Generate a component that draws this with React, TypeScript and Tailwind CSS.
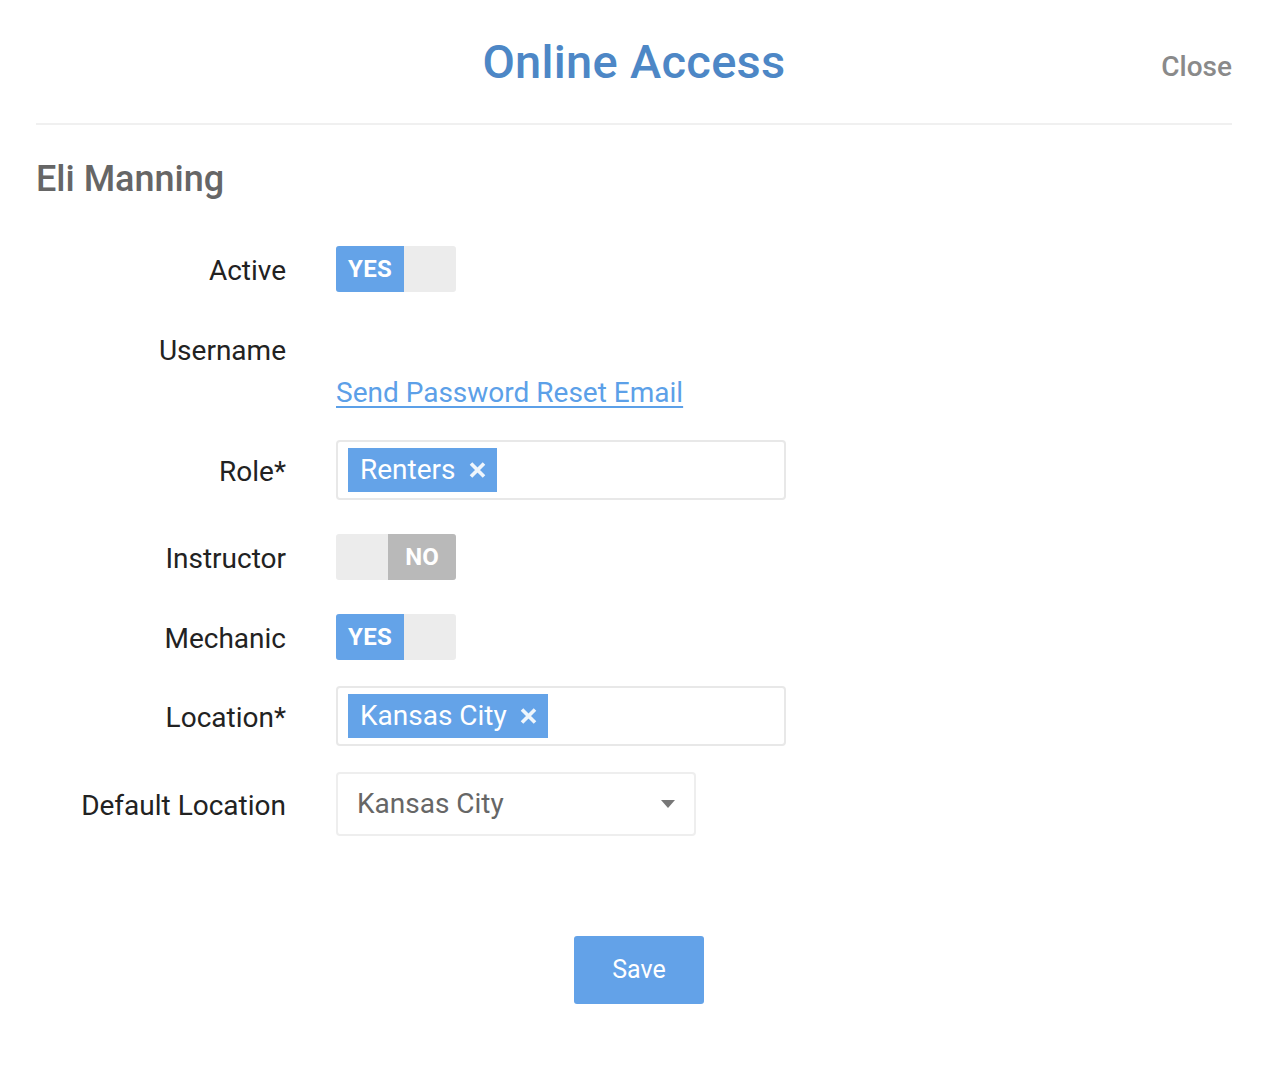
import React from "react";

function Toggle({ on }: { on: boolean }) {
  if (on) {
    return (
      <div className="flex h-[46px] w-[120px] rounded-[3px] overflow-hidden bg-[#ececec]">
        <div className="flex w-[68px] items-center justify-center bg-[#64a3e8] text-[24px] font-bold text-white tracking-[0.3px]">YES</div>
      </div>
    );
  }
  return (
    <div className="flex h-[46px] w-[120px] rounded-[3px] overflow-hidden bg-[#ececec]">
      <div className="w-[52px]" />
      <div className="flex flex-1 items-center justify-center bg-[#b9b9b9] text-[24px] font-bold text-white">NO</div>
    </div>
  );
}

function Tag({ text }: { text: string }) {
  return (
    <div className="flex h-[44px] items-center gap-[13px] bg-[#64a3e8] pl-[12px] pr-[11px] text-white">
      <span className="text-[28px] leading-none">{text}</span>
      <svg width="17" height="16" viewBox="0 0 17 16">
        <path d="M2 1.5 L15 14.5 M15 1.5 L2 14.5" stroke="white" strokeWidth="3.6" strokeLinecap="butt" opacity="0.9" />
      </svg>
    </div>
  );
}

function Row({ label, children, className = "" }: { label: string; children: React.ReactNode; className?: string }) {
  return (
    <div className={`flex items-center ${className}`}>
      <div className="mt-[4px] w-[250px] shrink-0 text-right text-[28px] text-[#222]">{label}</div>
      <div className="ml-[50px]">{children}</div>
    </div>
  );
}

export default function App() {
  return (
    <div className="min-h-[1076px] w-full bg-white" style={{ fontFamily: "Roboto, 'Noto Sans', sans-serif" }}>
      <div className="mx-[34px] ml-[36px]">
        <div className="relative flex h-[125px] items-center justify-center border-b-2 border-[#f0f0f0]">
          <h1 className="mt-[2px] text-[47px] font-medium text-[#4d87c6] tracking-[0.3px]">Online Access</h1>
          <button className="absolute right-0 top-[46px] text-[28px] font-medium text-[#8a8a8a]">Close</button>
        </div>
        <div className="mt-[27px] text-[36px] font-medium text-[#666]">Eli Manning</div>

        <Row label="Active" className="mt-[40px]">
          <Toggle on />
        </Row>

        <div className="mt-[41px] flex">
          <div className="w-[250px] shrink-0 text-right text-[28px] leading-[36px] text-[#222]">Username</div>
          <div className="ml-[50px] flex flex-col">
            <div className="h-[36px]" />
            <a className="mt-[6px] text-[28px] leading-[36px] text-[#5ca0e8] underline underline-offset-[4px] decoration-[2px]">Send Password Reset Email</a>
          </div>
        </div>

        <Row label="Role*" className="mt-[29px]">
          <div className="flex h-[60px] w-[450px] items-center rounded-[4px] border-2 border-[#e8e8e8] px-[10px]">
            <Tag text="Renters" />
          </div>
        </Row>

        <Row label="Instructor" className="mt-[34px]">
          <Toggle on={false} />
        </Row>

        <Row label="Mechanic" className="mt-[34px]">
          <Toggle on />
        </Row>

        <Row label="Location*" className="mt-[26px]">
          <div className="flex h-[60px] w-[450px] items-center rounded-[4px] border-2 border-[#e8e8e8] px-[10px]">
            <Tag text="Kansas City" />
          </div>
        </Row>

        <Row label="Default Location" className="mt-[26px]">
          <div className="flex h-[64px] w-[360px] items-center justify-between rounded-[4px] border-2 border-[#eeeeee] pl-[19px] pr-[18px]">
            <span className="text-[28px] text-[#666]">Kansas City</span>
            <svg width="16" height="10" viewBox="0 0 16 10">
              <path d="M1 1 L15 1 L8 9 Z" fill="#777" />
            </svg>
          </div>
        </Row>

        <div className="mt-[100px] flex justify-center pl-[10px]">
          <button className="h-[68px] w-[130px] rounded-[3px] bg-[#63a2e8] text-[25px] text-white">Save</button>
        </div>
      </div>
    </div>
  );
}
